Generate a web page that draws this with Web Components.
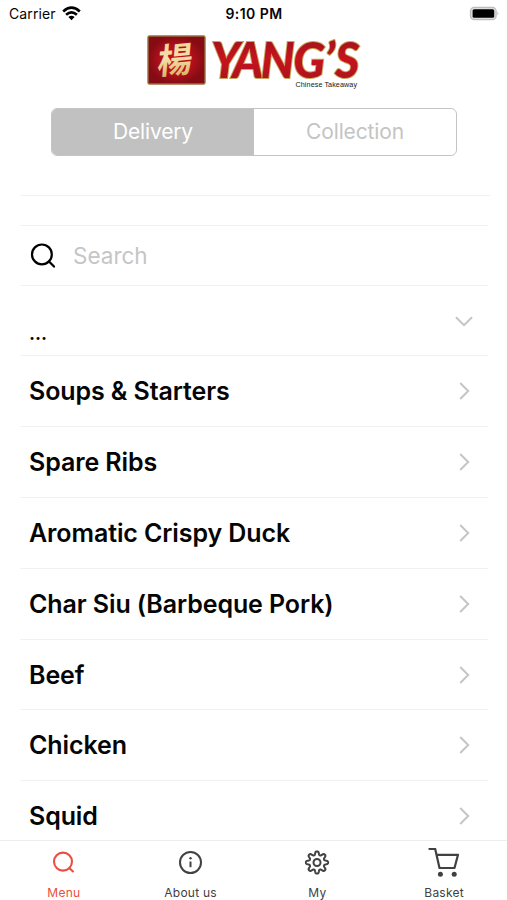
<!DOCTYPE html>
<html lang="en">
<head>
<meta charset="utf-8">
<title>Yang's Chinese Takeaway</title>
<style>
html,body{margin:0;height:100%;background:#fff}
body{font-family:Inter,"Liberation Sans",sans-serif;color:#050505;overflow:hidden}
</style>
</head>
<body>
<takeaway-app></takeaway-app>
<script>
const define = (name, html) => customElements.define(name, class extends HTMLElement {
  constructor() {
    super();
    this.attachShadow({mode: 'open'}).innerHTML = typeof html === 'function' ? html(this) : html;
  }
});

define('status-bar', `
<style>
:host{display:grid;grid-template-columns:1fr 1fr 1fr;align-items:center;height:28px;padding:0 8px 0 9px;box-sizing:border-box;font-size:14px;line-height:28px}
.l{display:flex;align-items:center;gap:6px;letter-spacing:.1px}
.c{text-align:center;font-weight:600;font-size:14px;letter-spacing:.45px}
.r{display:flex;justify-content:flex-end}
svg{display:block}
.l svg{margin-bottom:2px}
</style>
<div class="l"><span>Carrier</span>
<svg width="19" height="15" viewBox="0 0 19 15" fill="none" stroke="#000" stroke-width="2.7"><path d="M1.2 5.4Q9.5-2 17.8 5.4M4.1 8.7Q9.5 4 14.9 8.7"/><path d="M9.5 14.3L6.4 11Q9.5 8.7 12.6 11Z" fill="#000" stroke="none"/></svg></div>
<div class="c">9:10 PM</div>
<div class="r"><svg width="30" height="16" viewBox="0 0 30 16"><rect x="1.5" y="1.3" width="25.600" height="12.400" rx="3.8" fill="#ddd" stroke="#bdbdbd" stroke-width="1.3"/><rect x="3.6" y="3.2" width="21.600" height="8.6" rx="1.6"/><path d="M28.5 5.6q1.6 2 0 4z" fill="#aaa"/></svg></div>`);

define('brand-logo', `
<style>:host{display:block;width:216px;height:58px;margin:5px 0 0 146px}svg{display:block;overflow:visible}</style>
<svg width="216" height="58" viewBox="0 0 216 58">
<defs>
<radialGradient id="red"><stop stop-color="#ca111c"/><stop offset=".6" stop-color="#af101a"/><stop offset="1" stop-color="#850c14"/></radialGradient>
<linearGradient id="gold" x2="0" y2="1"><stop stop-color="#edcf8b"/><stop offset=".5" stop-color="#f5dfaa"/><stop offset="1" stop-color="#d4a552"/></linearGradient>
<linearGradient id="name" x2="0" y2="1"><stop stop-color="#8e121a"/><stop offset=".5" stop-color="#c7131e"/><stop offset="1" stop-color="#a3141b"/></linearGradient>
</defs>
<rect x="2" y="3" width="57" height="48" rx="1.5" fill="url(#red)" stroke="#9b7040" stroke-width="1.4"/>
<text transform="translate(10.500 41.500) rotate(-5) skewX(-10)" font-family="Noto Sans CJK TC,sans-serif" font-weight="700" font-size="35" fill="url(#gold)">楊</text>
<text transform="translate(65 45) scale(.94 1)" x="0 23 53 87.500 121 132" y="0" font-family="Lato,sans-serif" font-style="italic" font-weight="900" font-size="50" fill="url(#name)" stroke="#c9a560" stroke-width="2" paint-order="stroke">YANG’S</text>
<text x="149.500" y="54" font-family="Liberation Sans,sans-serif" font-size="7.200" textLength="61.500" fill="#161616">Chinese Takeaway</text>
</svg>`);

define('segmented-control', `
<style>
:host{display:grid;grid-template-columns:1fr 1fr;width:406px;height:48px;box-sizing:border-box;margin:17px 0 0 51px;border:1.5px solid #c4c4c4;border-radius:6px;overflow:hidden;font-size:21px;letter-spacing:-.15px;line-height:46px;text-align:center}
::slotted(*){color:#c4c4c4}
::slotted([selected]){background:#c1c1c1;color:#fff}
</style><slot></slot>`);

define('search-field', `
<style>
:host{display:flex;align-items:center;height:61px;box-sizing:border-box;margin:0 19px 0 20px;padding:0 10px;border-top:1px solid #f1f1f1;border-bottom:1px solid #f1f1f1;color:#c5c5c7;font-size:22.500px}
svg{display:block;margin-right:17px}
</style>
<svg width="26" height="26" viewBox="0 0 26 26" fill="none" stroke="#000" stroke-width="2.200" stroke-linecap="round"><circle cx="11.900" cy="11.400" r="9.900"/><path d="M19 18.500L24 23.600"/></svg><slot></slot>`);

define('menu-row', `
<style>
:host{display:flex;align-items:center;justify-content:space-between;height:70.900px;box-sizing:border-box;margin:0 19px 0 20px;padding:0 14px 0 9px;border-bottom:1px solid #f1f1f1;font-size:25px;font-weight:600;letter-spacing:-.1px}
:host([open]){height:70px;font-size:19px}
:host([open]) span{padding-top:26px}
svg{display:block}
:host([open]) svg{transform:rotate(90deg)}
</style>
<span><slot></slot></span>
<svg width="20" height="20" viewBox="0 0 20 20" fill="none" stroke="#c5c5c7" stroke-width="2"><path d="M6.200 2L14.200 10L6.200 18"/></svg>`);

// Gear outline: eight rounded teeth around the hub.
const gear = (() => {
  let d = '';
  for (let i = 0; i <= 160; i++) {
    const a = i / 160 * Math.PI * 2;
    const r = 9.400 + 1.700 * Math.tanh(1.6 * Math.cos(8 * a)) / Math.tanh(1.6);
    d += (i ? 'L' : 'M') + (16 + r * Math.sin(a)).toFixed(2) + ' ' + (14.500 - r * Math.cos(a)).toFixed(2);
  }
  return d + 'Z';
})();
const icons = {
  search: '<g stroke-width="2.100" stroke-linecap="round"><circle cx="16" cy="13.600" r="9"/><path d="M22.500 20.200L26 23.400"/></g>',
  info: '<circle cx="16.500" cy="14.500" r="10.500" stroke-width="2"/><path d="M16.500 13.500V19.200" stroke-width="2"/><circle cx="16.500" cy="10.300" r="1.200" fill="currentColor" stroke="none"/>',
  gear: `<path d="${gear}" stroke-width="2" stroke-linejoin="round"/><circle cx="16" cy="14.500" r="3.500" stroke-width="2"/>`,
  cart: '<path d="M1.500 1H7.200L11.500 20H26.500L30 6.800H8.800" stroke-width="2.200" stroke-linejoin="round" stroke-linecap="round"/><g fill="currentColor" stroke="none"><circle cx="12.400" cy="26.300" r="2.500"/><circle cx="26.200" cy="26.300" r="2.500"/></g>'
};

define('tab-item', el => `
<style>
:host{display:flex;flex-direction:column;align-items:center;color:#414141;font-size:12px;letter-spacing:.25px;padding-top:7px}
:host([active]){color:#ec4d40}
svg{display:block}
span{line-height:16px;margin-top:7px;padding-left:1px}
</style>
<svg width="32" height="30" viewBox="0 0 32 30" fill="none" stroke="currentColor">${icons[el.getAttribute('icon')]}</svg>
<span><slot></slot></span>`);

define('tab-bar', `
<style>:host{display:grid;grid-template-columns:repeat(4,1fr);height:60px;box-sizing:border-box;border-top:1px solid #ededed;background:#fff;flex:none}</style><slot></slot>`);

define('takeaway-app', `
<style>
:host{display:flex;flex-direction:column;width:507px;height:900px;background:#fff}
main{flex:1;min-height:0;overflow:hidden}
hr{border:0;height:1px;background:#f1f1f1;margin:39px 17px 29px 20px}
</style>
<main>
<status-bar></status-bar>
<brand-logo></brand-logo>
<segmented-control><div selected>Delivery</div><div>Collection</div></segmented-control>
<hr>
<search-field>Search</search-field>
<menu-row open>...</menu-row>
<menu-row>Soups &amp; Starters</menu-row>
<menu-row>Spare Ribs</menu-row>
<menu-row>Aromatic Crispy Duck</menu-row>
<menu-row>Char Siu (Barbeque Pork)</menu-row>
<menu-row>Beef</menu-row>
<menu-row>Chicken</menu-row>
<menu-row>Squid</menu-row>
</main>
<tab-bar>
<tab-item icon="search" active>Menu</tab-item>
<tab-item icon="info">About us</tab-item>
<tab-item icon="gear">My</tab-item>
<tab-item icon="cart">Basket</tab-item>
</tab-bar>`);
</script>
</body>
</html>
